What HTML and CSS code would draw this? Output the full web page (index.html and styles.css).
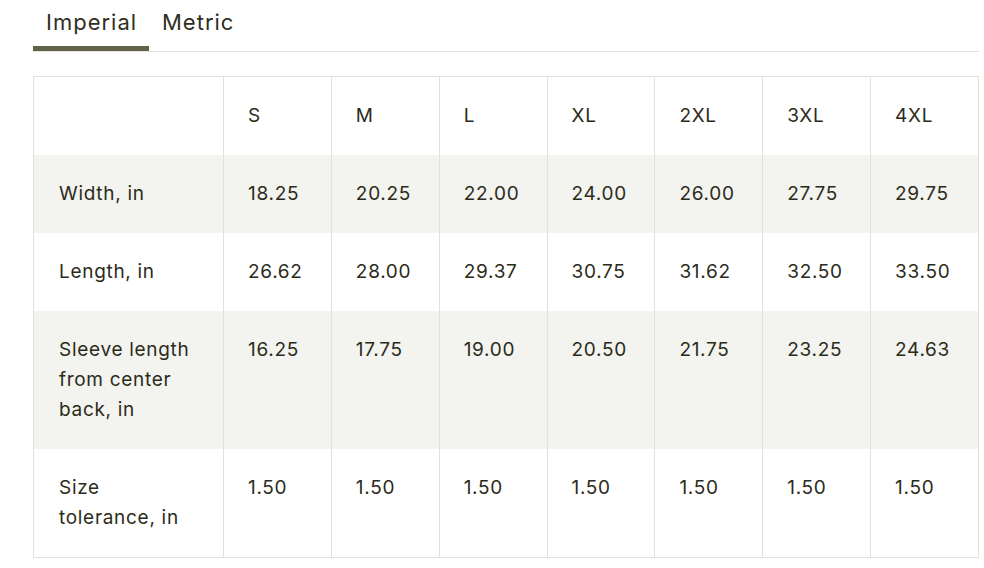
FILE: index.html
```html
<!DOCTYPE html>
<html>
<head>
<meta charset="utf-8">
<link rel="stylesheet" href="styles.css">
</head>
<body>
<div class="page">
  <div class="tabs">
    <div class="tab active">Imperial</div>
    <div class="tab">Metric</div>
  </div>
  <table class="sizes">
    <colgroup>
      <col class="c-label"><col><col><col><col><col><col><col>
    </colgroup>
    <thead>
      <tr><th></th><th>S</th><th>M</th><th>L</th><th>XL</th><th>2XL</th><th>3XL</th><th>4XL</th></tr>
    </thead>
    <tbody>
      <tr class="alt"><td>Width, in</td><td>18.25</td><td>20.25</td><td>22.00</td><td>24.00</td><td>26.00</td><td>27.75</td><td>29.75</td></tr>
      <tr><td>Length, in</td><td>26.62</td><td>28.00</td><td>29.37</td><td>30.75</td><td>31.62</td><td>32.50</td><td>33.50</td></tr>
      <tr class="alt"><td>Sleeve length from center back, in</td><td>16.25</td><td>17.75</td><td>19.00</td><td>20.50</td><td>21.75</td><td>23.25</td><td>24.63</td></tr>
      <tr><td>Size tolerance, in</td><td>1.50</td><td>1.50</td><td>1.50</td><td>1.50</td><td>1.50</td><td>1.50</td><td>1.50</td></tr>
    </tbody>
  </table>
</div>
</body>
</html>
```
FILE: styles.css
```css
html, body {
  margin: 0;
  padding: 0;
  background: #ffffff;
}
body {
  font-family: Inter, "Liberation Sans", sans-serif;
  color: #2b2b1a;
}
.page {
  width: 946px;
  padding-left: 33px;
}
.tabs {
  display: flex;
  border-bottom: 1px solid #e2e1da;
  height: 51px;
  box-sizing: content-box;
}
.tab {
  padding: 8px 13px 0;
  font-size: 22px;
  line-height: 28px;
  letter-spacing: 1px;
  color: #2f2f1c;
  box-sizing: border-box;
}
.tab.active {
  border-bottom: 5px solid #626149;
  width: 116px;
}
.sizes {
  margin-top: 24px;
  width: 946px;
  border-collapse: collapse;
  table-layout: fixed;
  border: 1px solid #e2e1da;
}
.c-label {
  width: 190px;
}
.sizes th, .sizes td {
  border-left: 1px solid #e2e1da;
  border-right: 1px solid #e2e1da;
  padding: 24px 24px 24px 24px;
  font-size: 19px;
  font-weight: 400;
  line-height: 30px;
  letter-spacing: 0.7px;
  text-align: left;
  vertical-align: top;
}
.sizes th:first-child, .sizes td:first-child {
  padding-left: 25px;
  padding-right: 23px;
}
.sizes tr.alt td {
  background: #f3f3ef;
}
```
